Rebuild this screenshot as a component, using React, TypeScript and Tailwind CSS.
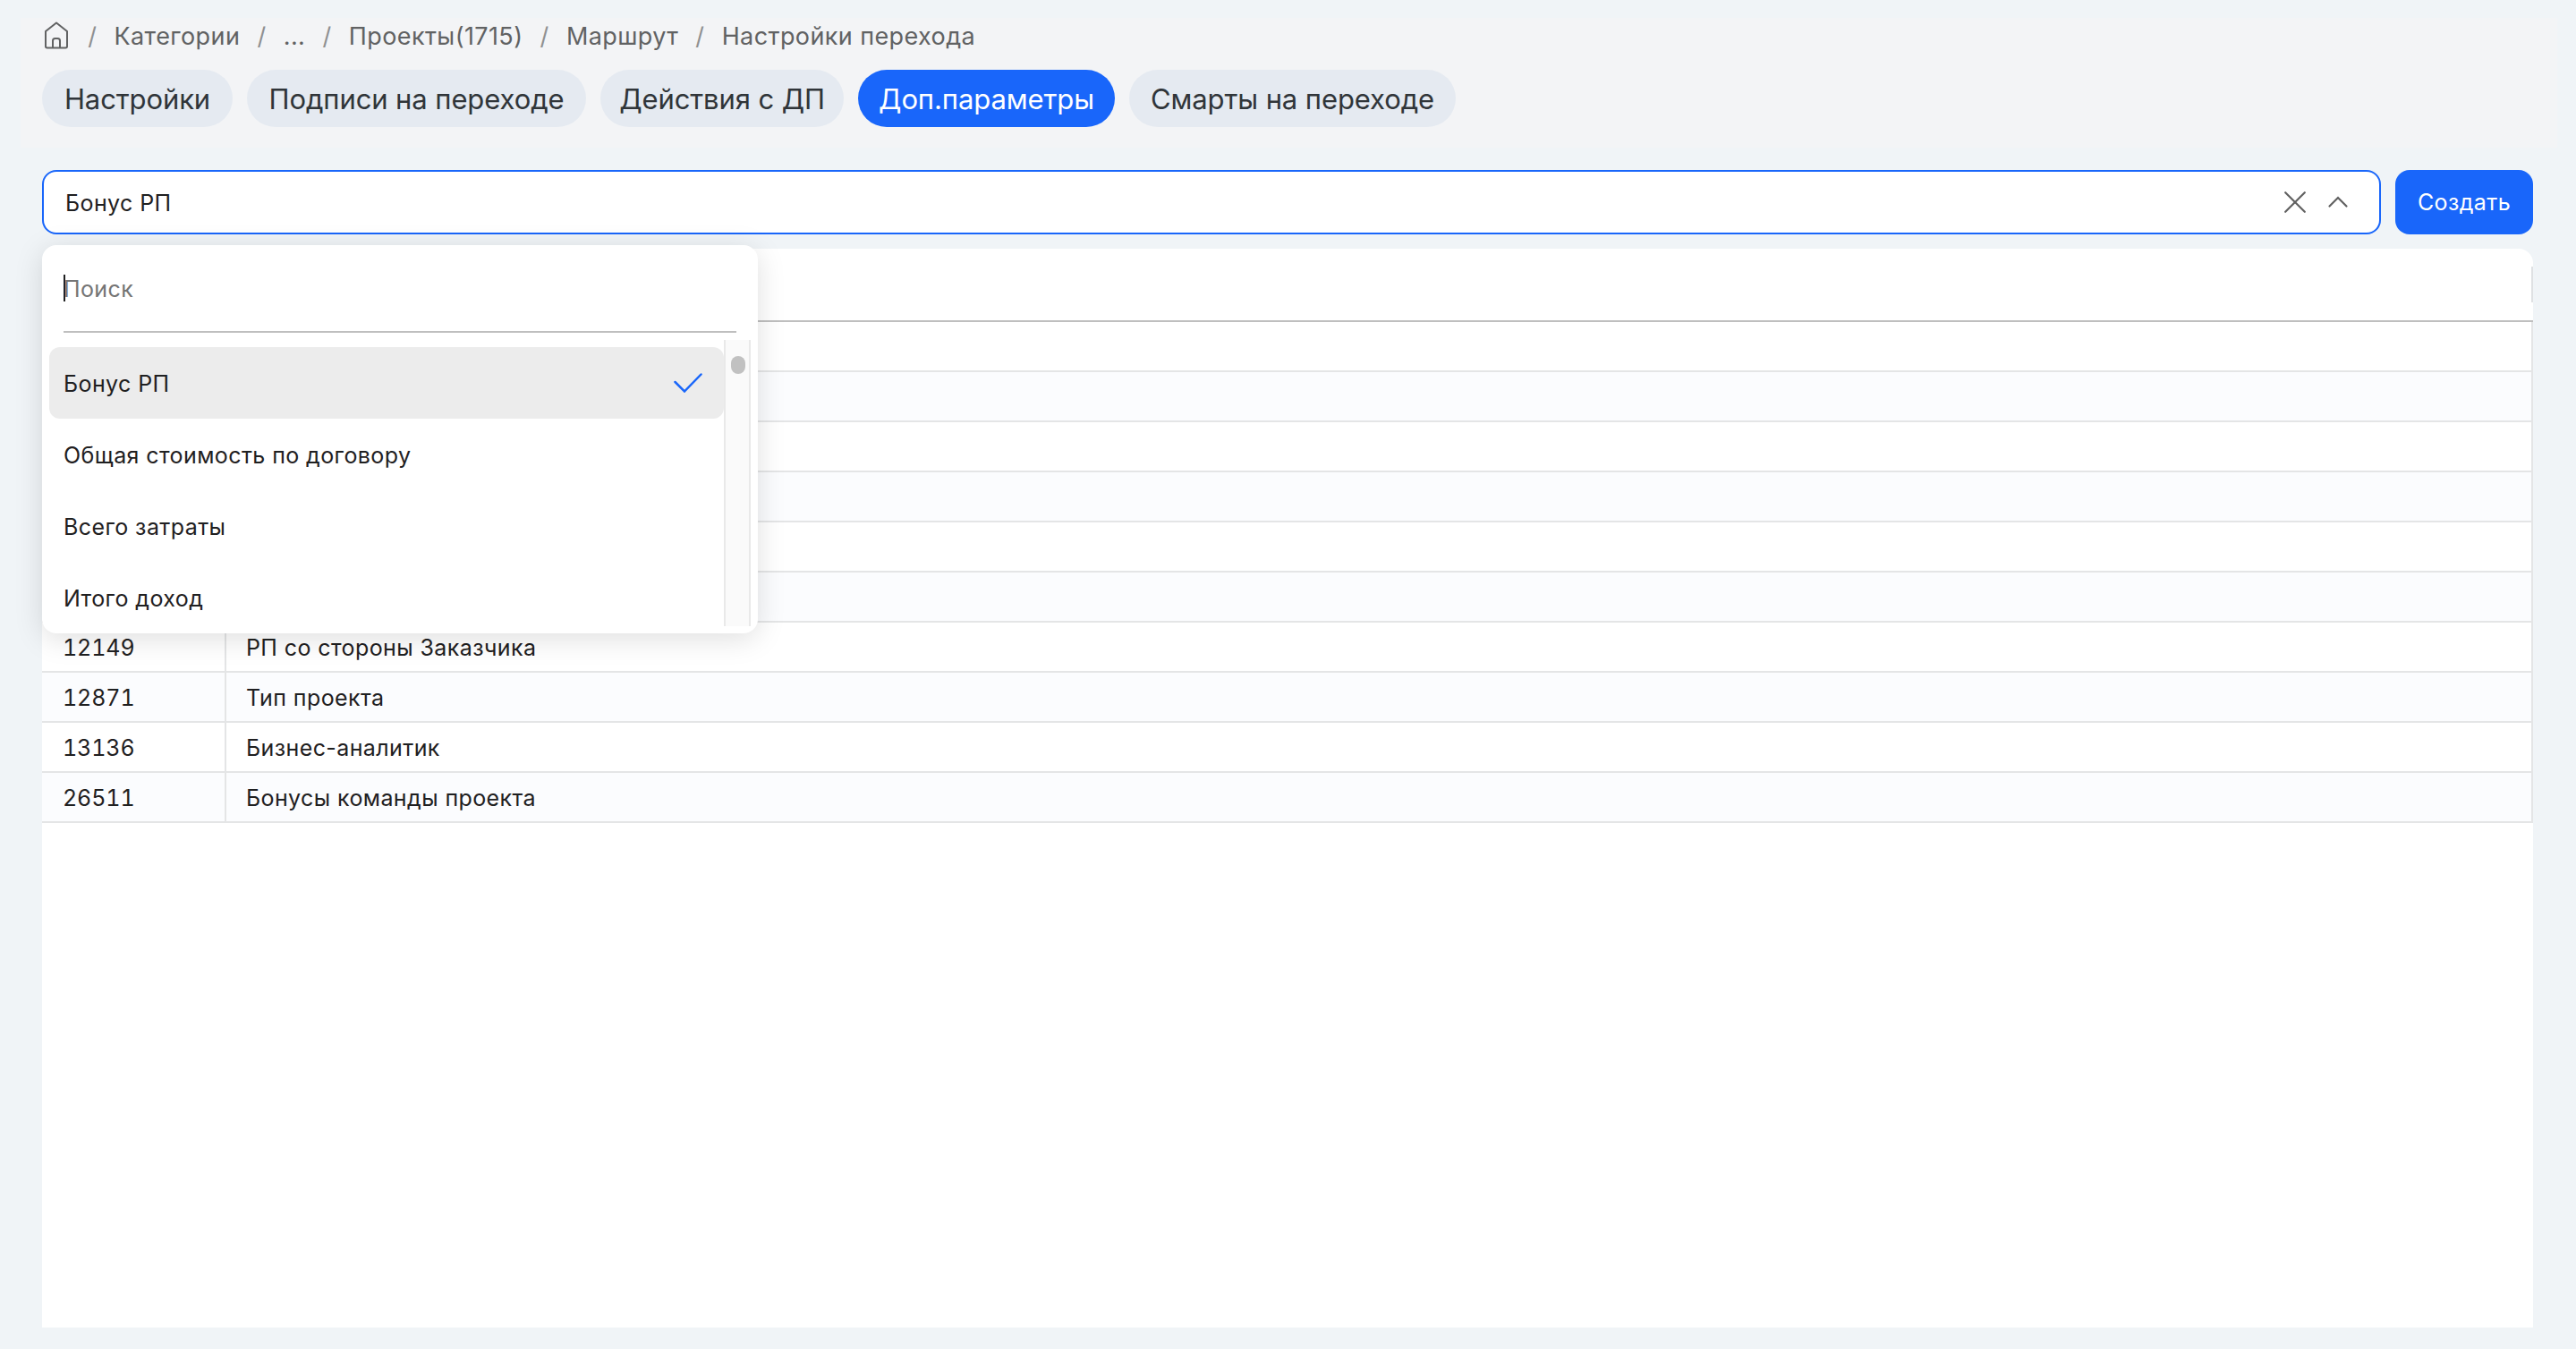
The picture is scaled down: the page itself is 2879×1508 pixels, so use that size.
import React from "react";

const crumbs = [
  "Категории",
  "...",
  "Проекты(1715)",
  "Маршрут",
  "Настройки перехода",
];

const tabs = [
  { label: "Настройки", width: "w-[213px]" },
  { label: "Подписи на переходе", width: "w-[379px]" },
  { label: "Действия с ДП", width: "w-[272px]" },
  { label: "Доп.параметры", width: "w-[287px]", active: true },
  { label: "Смарты на переходе", width: "w-[365px]" },
];

const options = [
  "Бонус РП",
  "Общая стоимость по договору",
  "Всего затраты",
  "Итого доход",
];

// The first rows are hidden behind the open dropdown
const rows = [
  { id: "", name: "" },
  { id: "", name: "" },
  { id: "", name: "" },
  { id: "", name: "" },
  { id: "", name: "" },
  { id: "", name: "" },
  { id: "12149", name: "РП со стороны Заказчика" },
  { id: "12871", name: "Тип проекта" },
  { id: "13136", name: "Бизнес-аналитик" },
  { id: "26511", name: "Бонусы команды проекта" },
];

const HomeIcon: React.FC = () => (
  <svg
    className="h-8 w-8 shrink-0"
    viewBox="0 0 32 32"
    fill="none"
    stroke="currentColor"
    strokeWidth="2"
    strokeLinejoin="round"
  >
    <path d="M4 11 16 1.500 28 11v16.800a1.700 1.700 0 0 1-1.700 1.700H5.700A1.700 1.700 0 0 1 4 27.800z" />
    <path d="M12 29.500v-8a2.500 2.500 0 0 1 2.500-2.500h3a2.500 2.500 0 0 1 2.500 2.500v8" />
  </svg>
);

const Breadcrumbs: React.FC = () => (
  <nav className="flex h-10 items-center text-[27px] tracking-[0.4px] text-[#616263]">
    <HomeIcon />

    {crumbs.map((crumb) => (
      <React.Fragment key={crumb}>
        <span className="w-[48.5px] shrink-0 pt-0.5 text-center text-[#8f9091]">
          /
        </span>
        <span className="pt-0.5">{crumb}</span>
      </React.Fragment>
    ))}
  </nav>
);

const Tabs: React.FC = () => (
  <div className="mt-[18px] flex gap-4">
    {tabs.map((tab) => (
      <button
        key={tab.label}
        type="button"
        className={`h-16 shrink-0 rounded-[32px] pt-0.5 text-[31px] tracking-[-0.1px] whitespace-nowrap ${tab.width} ${
          tab.active
            ? "bg-[#1966fa] text-white"
            : "bg-[#e5eaf1] text-[#303539]"
        }`}
      >
        {tab.label}
      </button>
    ))}
  </div>
);

const Dropdown: React.FC = () => (
  <div className="absolute top-[84px] left-0 z-10 h-[434px] w-[800px] rounded-2xl bg-white shadow-[0_6px_32px_rgba(0,0,0,0.13)]">
    {/* Search */}
    <div className="mx-6 flex h-[98px] items-center border-b-2 border-[#bfbfbf]">
      <span className="h-[30px] w-0.5 bg-[#1f2021]" />
      <span className="-ml-0.5 pt-[3px] text-[#757575]">Поиск</span>
    </div>

    <div className="mx-2 mt-2 flex h-80">
      <ul className="flex-1 overflow-hidden pt-2">
        {options.map((option, index) => (
          <li
            key={option}
            className={`flex h-20 items-center justify-between rounded-xl pr-6 pl-4 ${
              index === 0 ? "bg-[#ececec]" : ""
            }`}
          >
            <span className="pt-[3px]">{option}</span>

            {index === 0 && (
              <svg
                className="h-[22px] w-8"
                viewBox="0 0 32 22"
                fill="none"
                stroke="#1966fa"
                strokeWidth="2.500"
                strokeLinecap="round"
              >
                <path d="M1.500 10 12 20.500 30.500 1.500" />
              </svg>
            )}
          </li>
        ))}
      </ul>

      {/* Scrollbar */}
      <div className="flex w-[30px] justify-center border-x-2 border-[#e9e9e9] bg-[#fafafa] pt-[18px]">
        <div className="ml-0.5 h-5 w-4 rounded-full bg-[#c1c1c1]" />
      </div>
    </div>
  </div>
);

const Select: React.FC = () => (
  <div className="relative flex-1">
    <div className="flex h-[72px] items-center rounded-2xl border-2 border-[#1966fa] bg-white pr-[34px] pl-6">
      <span className="flex-1 pt-[3px]">Бонус РП</span>

      <svg
        className="h-6 w-[72px]"
        viewBox="0 0 72 24"
        fill="none"
        stroke="#616161"
        strokeWidth="2.200"
        strokeLinecap="round"
      >
        <path d="M1.200 1.200 22.800 22.800M22.800 1.200 1.200 22.800" />
        <path d="M50.500 16.500 60 7l9.500 9.500" />
      </svg>
    </div>

    <Dropdown />
  </div>
);

const Table: React.FC = () => (
  <div className="mt-4 h-[1206px] overflow-hidden rounded-t-2xl bg-white">
    <div className="flex h-[82px] justify-end border-b-2 border-[#bfbfbf] pt-5">
      <span className="h-10 w-0.5 bg-[#dfe1e3]" />
    </div>

    {rows.map((row, index) => (
      <div
        key={index}
        className={`flex h-14 items-stretch border-r-2 border-b-2 border-[#e4e5e6] leading-[56px] ${
          index % 2 === 0 ? "bg-white" : "bg-[#fbfcfe]"
        }`}
      >
        <div className="w-[206px] border-r-2 border-[#e4e5e6] pl-[23px] tracking-[-0.1px] tabular-nums">
          {row.id}
        </div>
        <div className="flex-1 pl-[22px]">{row.name}</div>
      </div>
    ))}
  </div>
);

export default function App() {
  return (
    <div className="h-[1508px] w-[2879px] overflow-hidden bg-[#f0f4f7] px-[23px] pt-5 font-['Inter',sans-serif] text-[25px] tracking-[0.4px] text-[#1f2021]">
      <header className="h-[145px] w-[2835px] bg-[#f3f4f6] px-6">
        <Breadcrumbs />
        <Tabs />
      </header>

      <main className="ml-6 w-[2784px] pt-[25px]">
        <div className="flex gap-4">
          <Select />

          <button
            type="button"
            className="h-[72px] w-[154px] rounded-2xl bg-[#1966fa] pt-0.5 text-white"
          >
            Создать
          </button>
        </div>

        <Table />
      </main>
    </div>
  );
}
